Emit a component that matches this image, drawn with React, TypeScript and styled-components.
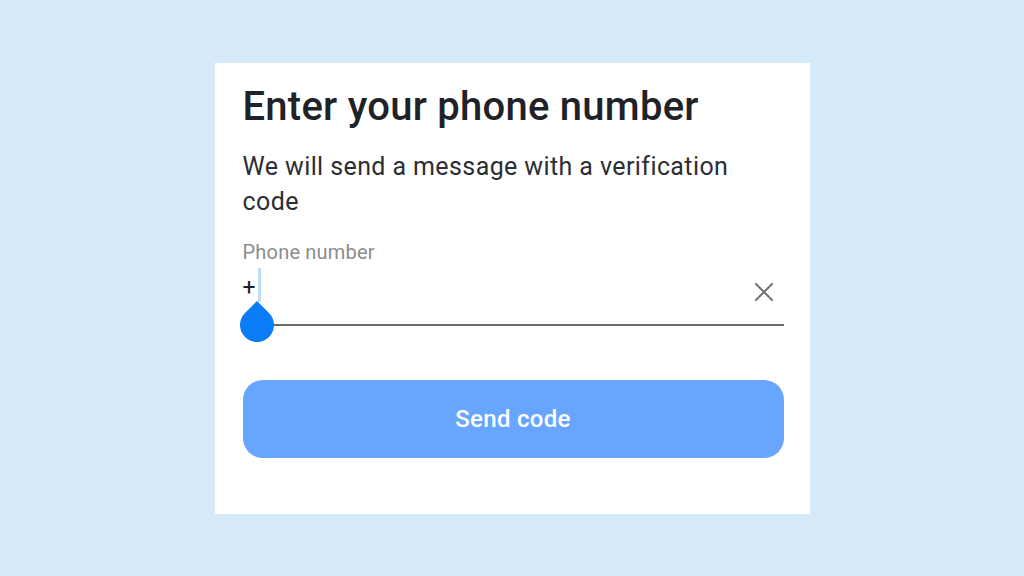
import React from "react";
import styled, { createGlobalStyle } from "styled-components";

const Global = createGlobalStyle`
  html, body { margin: 0; padding: 0; }
  body {
    background: #d6e9f9;
    font-family: Roboto, "Noto Sans", "Liberation Sans", sans-serif;
  }
`;

const Page = styled.div`
  width: 1024px;
  height: 576px;
  display: flex;
  align-items: center;
  justify-content: center;
`;

const Card = styled.div`
  width: 595px;
  height: 451px;
  box-sizing: border-box;
  background: #ffffff;
  padding: 20px 26px 0 28px;
  display: flex;
  flex-direction: column;
`;

const Title = styled.h1`
  margin: 0;
  font-size: 40px;
  line-height: 48px;
  font-weight: 500;
  letter-spacing: 0.25px;
  color: #1f2226;
`;

const Subtitle = styled.p`
  margin: 18px 0 0;
  font-size: 25px;
  line-height: 35px;
  font-weight: 400;
  letter-spacing: 0.4px;
  color: #2b2e33;
`;

const Label = styled.div`
  margin-top: 21px;
  font-size: 20px;
  line-height: 24px;
  letter-spacing: 0.2px;
  color: #8c8c8c;
`;

const Field = styled.div`
  position: relative;
  margin-top: 12px;
  height: 48px;
  border-bottom: 2px solid #6b6b6b;
  display: flex;
  align-items: flex-start;
  justify-content: space-between;
`;

const Prefix = styled.span`
  font-size: 23px;
  line-height: 24px;
  color: #1f2226;
`;

const Cursor = styled.div`
  position: absolute;
  left: 15px;
  top: -8px;
  width: 3px;
  height: 34px;
  background: #bcdcf9;
`;

const Handle = styled.div`
  position: absolute;
  left: -3px;
  top: 32px;
  width: 34px;
  height: 34px;
  background: #0a7cf5;
  border-radius: 0 50% 50% 50%;
  transform: rotate(45deg);
`;

const Clear = styled.button`
  border: none;
  background: none;
  padding: 0;
  margin-right: 8px;
  margin-top: 4px;
  width: 24px;
  height: 24px;
  display: flex;
  align-items: center;
  justify-content: center;
`;

const SendButton = styled.button`
  margin-top: 54px;
  height: 78px;
  width: 100%;
  border: none;
  border-radius: 20px;
  background: #67a5fe;
  color: #ffffff;
  font-family: Roboto, "Noto Sans", "Liberation Sans", sans-serif;
  font-size: 24px;
  font-weight: 500;
  letter-spacing: 0.3px;
`;

export default function App() {
  return (
    <>
      <Global />
      <Page>
        <Card>
          <Title>Enter your phone number</Title>
          <Subtitle>We will send a message with a verification code</Subtitle>
          <Label>Phone number</Label>
          <Field>
            <Prefix>+</Prefix>
            <Cursor />
            <Handle />
            <Clear aria-label="Clear">
              <svg width="20" height="20" viewBox="0 0 20 20">
                <path d="M2 2 L18 18 M18 2 L2 18" stroke="#777" strokeWidth="2.2" strokeLinecap="round" />
              </svg>
            </Clear>
          </Field>
          <SendButton>Send code</SendButton>
        </Card>
      </Page>
    </>
  );
}
